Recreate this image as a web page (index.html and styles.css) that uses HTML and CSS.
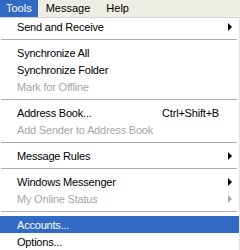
FILE: index.html
```html
<!DOCTYPE html>
<html lang="en-US">

<head>
    <meta charset="UTF-8">
    <title>Tools menu</title>
    <link rel="stylesheet" href="styles.css">
</head>

<body>
    <div class="menubar">
        <div class="menubar-item menubar-active">Tools</div>
        <div class="menubar-item">Message</div>
        <div class="menubar-item">Help</div>
    </div>

    <div class="menu">
        <div class="item"><span class="label">Send and Receive</span><span class="arrow"></span></div>
        <div class="sep"></div>
        <div class="item"><span class="label">Synchronize All</span></div>
        <div class="item"><span class="label">Synchronize Folder</span></div>
        <div class="item disabled"><span class="label">Mark for Offline</span></div>
        <div class="sep"></div>
        <div class="item"><span class="label">Address Book...</span><span class="shortcut">Ctrl+Shift+B</span></div>
        <div class="item disabled"><span class="label">Add Sender to Address Book</span></div>
        <div class="sep"></div>
        <div class="item"><span class="label">Message Rules</span><span class="arrow"></span></div>
        <div class="sep"></div>
        <div class="item"><span class="label">Windows Messenger</span><span class="arrow"></span></div>
        <div class="item disabled"><span class="label">My Online Status</span><span class="arrow"></span></div>
        <div class="sep"></div>
        <div class="item selected"><span class="label">Accounts...</span></div>
        <div class="item"><span class="label">Options...</span></div>
    </div>
</body>

</html>
```

FILE: styles.css
```css
body,
html {
    margin: 0;
    background: white;
}

body {
    width: 240px;
    height: 250px;
    overflow: hidden;
    font-family: "Liberation Sans", Arial, sans-serif;
    font-size: 11px;
    color: black;
}

.menubar {
    display: flex;
    height: 17px;
    background: #eeede6;
    border-bottom: 1px solid #d6d3c8;
}

.menubar-item {
    padding: 0 8px;
    line-height: 17px;
}

.menubar-active {
    padding: 0 6px;
    background: #316ac5;
    color: white;
}

.menu {
    display: flex;
    flex-direction: column;
    border-right: 1px solid #e4e4e4;
}

.item {
    display: flex;
    align-items: center;
    flex: none;
    height: 17px;
    padding: 1px 7px 0 17px;
    box-sizing: border-box;
    letter-spacing: -0.2px;
}

.label {
    flex: 1;
}

.shortcut {
    margin-right: 13px;
}

.disabled {
    color: #a7a6aa;
}

.selected {
    background: #316ac5;
    color: white;
}

.sep {
    flex: none;
    height: 1px;
    margin: 4px 2px 4px 1px;
    background: #acacac;
}

.arrow {
    width: 0;
    height: 0;
    border-top: 4px solid transparent;
    border-bottom: 4px solid transparent;
    border-left: 4px solid black;
}

.disabled .arrow {
    border-left-color: #a7a6aa;
}
```
